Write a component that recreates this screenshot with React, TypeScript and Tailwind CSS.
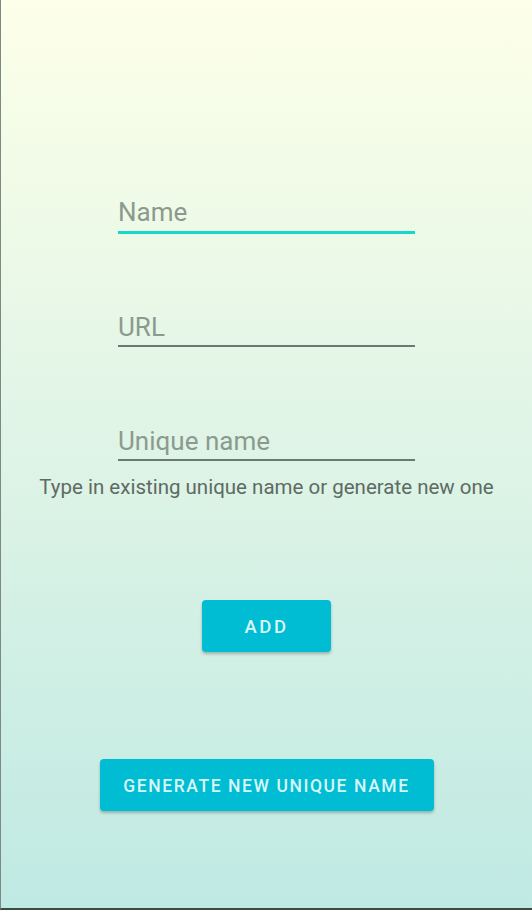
import { useState } from "react";

const fields = [
  { key: "name", label: "Name", gap: "" },
  { key: "url", label: "URL", gap: "mt-[77px]" },
  { key: "unique", label: "Unique name", gap: "mt-[78px]" },
];

export default function App() {
  const [focused, setFocused] = useState("name");
  const [values, setValues] = useState<Record<string, string>>({});

  return (
    <div className="h-[910px] w-full flex flex-col border-l border-b-2 border-l-[#7d8a83] border-b-[#3e4a3e] bg-gradient-to-b from-[#fdffe9] to-[#bfe9e3] font-['Roboto',sans-serif]">
      <div className="flex flex-col items-center pt-[196px]">
        {fields.map((f) => (
          <div key={f.key} className={`w-[297px] ${f.gap}`}>
            <input
              value={values[f.key] ?? ""}
              placeholder={f.label}
              onFocus={() => setFocused(f.key)}
              onChange={(e) => setValues({ ...values, [f.key]: e.target.value })}
              className={`block w-full bg-transparent outline-none text-[26px] leading-[30px] text-[#4a5550] placeholder:text-[#8c9a8e] ${
                focused === f.key
                  ? "pt-px pb-[4px] border-b-[3px] border-[#18d6c9]"
                  : "pt-px pb-[3px] border-b-2 border-[#6b7a70]"
              }`}
            />
          </div>
        ))}

        {/* helper */}
        <p className="mt-[14px] text-[20.5px] leading-[24px] text-[#5e6a64]">
          Type in existing unique name or generate new one
        </p>

        <button className="mt-[101px] w-[129px] h-[52px] pt-[3px] rounded-[4px] bg-[#00bdd3] text-[#d8f6f8] text-[18.5px] font-medium tracking-[0.14em] shadow-[0_2px_3px_rgba(0,0,0,0.25)]">
          ADD
        </button>

        <button className="mt-[107px] w-[334px] h-[52px] pt-[2px] rounded-[4px] bg-[#00bdd3] text-[#d8f6f8] text-[17.5px] font-medium tracking-[0.09em] shadow-[0_2px_3px_rgba(0,0,0,0.25)]">
          GENERATE NEW UNIQUE NAME
        </button>
      </div>
    </div>
  );
}
